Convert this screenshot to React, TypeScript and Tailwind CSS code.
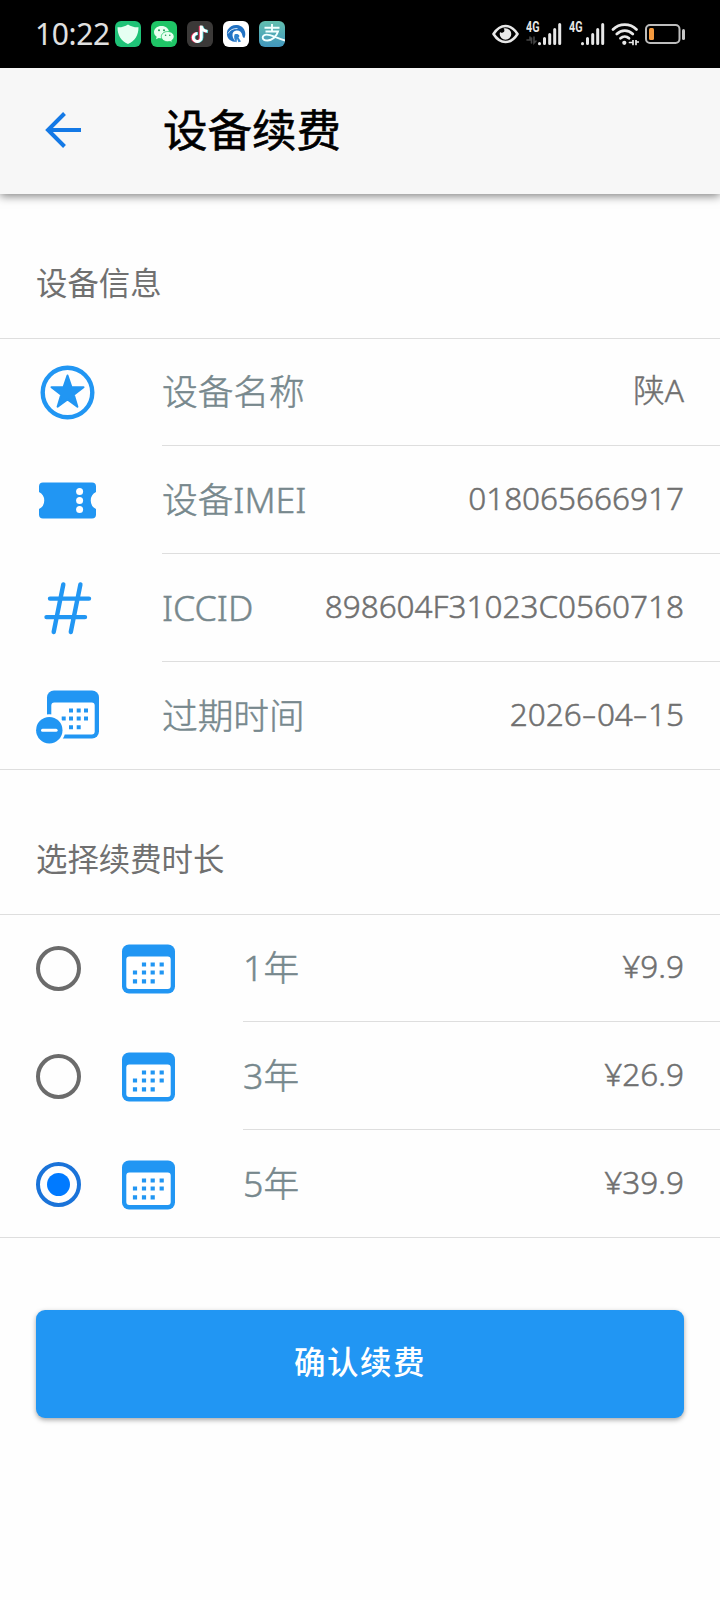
import type { ReactNode } from 'react';

const BLUE = '#2196f3';

function StarIcon() {
	return (
		<svg width="63" height="63" viewBox="0 0 63 63" fill={BLUE}>
			<circle cx="31.5" cy="31.5" r="24.8" fill="none" stroke={BLUE} strokeWidth="4.4" />
			<path
				d="M31.5 14.5l4 11.7h12l-9.700 7.500 3.600 12-9.900-7.200-9.900 7.200 3.600-12-9.700-7.500h12z"
				stroke={BLUE}
				strokeWidth="2"
				strokeLinejoin="round"
			/>
		</svg>
	);
}

function TicketIcon() {
	return (
		<svg width="63" height="63" viewBox="0 0 63 63">
			<path
				d="M7 13.500h49a4 4 0 0 1 4 4v5.500a9.500 9.500 0 0 0 0 17v5.500a4 4 0 0 1-4 4H7a4 4 0 0 1-4-4V40a9.500 9.500 0 0 0 0-17v-5.500a4 4 0 0 1 4-4z"
				fill={BLUE}
			/>
			<g fill="#fff">
				<circle cx="43.600" cy="22.500" r="3.500" />
				<circle cx="43.600" cy="31.500" r="3.500" />
				<circle cx="43.600" cy="40.500" r="3.500" />
			</g>
		</svg>
	);
}

function HashIcon() {
	return (
		<svg width="63" height="63" viewBox="0 0 63 63" fill="none" stroke={BLUE} strokeWidth="4.4" strokeLinecap="round">
			<path d="M27.300 7.500l-9.600 47.500M44.400 7.500l-9.600 47.500M14 21.600h39M10.500 40.100h38.500" />
		</svg>
	);
}

function CalendarMinusIcon() {
	return (
		<svg width="63" height="63" viewBox="0 0 63 63" fill={BLUE}>
			<rect x="11" y="5.500" width="52" height="48" rx="7" />
			<rect x="15.300" y="17.500" width="43.400" height="32" rx="3" fill="#fff" />
			<path
				d="M35 25.500h0M42.700 25.500h0M50 25.500h0M27.700 33.500h0M35 33.500h0M42.700 33.500h0M50 33.500h0M35 42.200h0M42.700 42.200h0"
				stroke={BLUE}
				strokeWidth="4"
				strokeLinecap="square"
				transform="translate(0 0)"
			/>
			<circle cx="13.300" cy="45.200" r="16" fill="#fff" />
			<circle cx="13.300" cy="45.200" r="13.200" />
			<path d="M6.500 45.200h13.600" stroke="#fff" strokeWidth="3" strokeLinecap="round" />
		</svg>
	);
}

function CalendarIcon() {
	return (
		<svg width="63" height="63" viewBox="0 0 63 63" fill={BLUE}>
			<rect x="5" y="7.500" width="53" height="49" rx="7" />
			<rect x="9.300" y="19.500" width="44.400" height="32.600" rx="3" fill="#fff" />
			<path
				d="M27 27.500h0M35.700 27.500h0M44.700 27.500h0M18 35.500h0M27 35.500h0M35.700 35.500h0M44.700 35.500h0M18 44.400h0M27 44.400h0M35.700 44.400h0"
				stroke={BLUE}
				strokeWidth="4.200"
				strokeLinecap="square"
			/>
		</svg>
	);
}

function AppBadges() {
	return (
		<div className="flex gap-[10px]">
			<svg width="26" height="26" viewBox="0 0 26 26">
				<rect width="26" height="26" rx="6" fill="#1fc277" />
				<path d="M13 3.500c3 2 6.500 3 10.500 2.800 0 8-3.500 14-10.500 16.700C6 20.300 2.500 14.300 2.500 6.300 6.500 6.500 10 5.500 13 3.500z" fill="#e6fff2" />
			</svg>
			<svg width="26" height="26" viewBox="0 0 26 26">
				<rect width="26" height="26" rx="6" fill="#1fc566" />
				<path d="M10.500 5c-4.300 0-7.500 2.700-7.500 6.100 0 2 1 3.600 2.700 4.700l-.7 2.500 2.700-1.400c1 .3 1.800.4 2.800.4 4.200 0 7.500-2.700 7.500-6.200S14.800 5 10.500 5z" fill="#e8fff0" />
				<path d="M16.700 10.500c-3.600 0-6.400 2.300-6.400 5.100s2.800 5.100 6.400 5.100c.8 0 1.600-.1 2.300-.3l2.300 1.200-.6-2c1.500-1 2.400-2.400 2.400-4 0-2.800-2.900-5.100-6.400-5.100z" fill="#e8fff0" stroke="#1fc566" strokeWidth=".8" />
				<g fill="#1f9c55">
					<circle cx="8" cy="9.300" r="1" />
					<circle cx="13" cy="9.300" r="1" />
					<circle cx="14.600" cy="14.200" r=".8" />
					<circle cx="18.800" cy="14.200" r=".8" />
				</g>
			</svg>
			<svg width="26" height="26" viewBox="0 0 26 26" fill="none" strokeWidth="2.800">
				<rect width="26" height="26" rx="6" fill="#3b3938" />
				<path d="M13.200 5v11.500a4 4 0 1 1-4-4M13.200 5.500c.6 3 2.800 4.800 6 5" stroke="#e8315b" />
				<path d="M15 5v11.500a4 4 0 1 1-4-4M15 5.500c.6 3 2.800 4.800 6 5" stroke="#4fe3e0" />
				<path d="M14.200 4.500v12a4 4 0 1 1-4-4M14.200 5.200c.6 3 2.800 4.800 6 5" stroke="#fff" />
			</svg>
			<svg width="26" height="26" viewBox="0 0 26 26">
				<rect width="26" height="26" rx="6" fill="#fff" />
				<path
					d="M4.500 9C6.500 5.500 10 3.700 14 4c5 .4 8.500 4.500 8.300 9.300-.1 1.700-.4 2.700-1 3.700-1-.3-1.600-1-1.800-2-.6-4-3-5.700-6-5.500-2.700.2-4.300 2.300-4 5 .3 2.800 1.800 5 4 6.500C8 21 4.500 18 4 14c-.2-2 0-3.500.5-5z"
					fill="#2272c3"
				/>
				<path d="M11.500 13.500c2-1 4-.5 5 1.500l-1 1.500 2.500 4-2.500.7-1.500-3.500-.5 3.700c-2-1.700-3-4.900-2-7.900z" fill="#2f83d0" />
				<path d="M5 12.500C7 9 10 7.300 14.500 7.500" fill="none" stroke="#fff" strokeWidth=".8" />
			</svg>
			<div className="overflow-hidden rounded-[6px] bg-gradient-to-b from-[#62bfae] to-[#4296bd]">
				<svg width="26" height="26" viewBox="0 0 26 26" fill="none" stroke="#f2ffff" strokeWidth="1.900">
					<path d="M5.500 6.800h15M13 3v7.300M6.500 10.500h12.500c-1.500 4.800-5.500 9-10.500 9-3 0-4.800-1.200-4.800-3 0-1.700 1.600-2.900 4-2.900 4.500 0 8.800 3.200 18.300 5.900" />
				</svg>
			</div>
		</div>
	);
}

function Signal({ data = false }: { data?: boolean }) {
	return (
		<div className="relative h-[24px] w-[36px]">
			<span className="absolute left-0 top-[-1px] origin-left scale-x-[.74] font-['Roboto'] text-[14.500px] font-bold leading-[14px] text-[#e6e6e6]">4G</span>
			<svg width="36" height="24" viewBox="0 0 36 24" stroke="#e8e8e8" strokeWidth="3" strokeLinecap="round">
				{data && <path d="M1 18h3v-3M5.500 21v-5M8 15v6l2-2" fill="none" stroke="#444" strokeWidth="1.600" />}
				<path d="M13.500 21.700v-.2M18.500 21.500v-5M23.700 21.500v-9M28.700 21.500V7.500M33.700 21.500V2.500" />
			</svg>
		</div>
	);
}

function StatusBar() {
	return (
		<div className="flex h-[68px] items-center bg-black pl-[35px] pr-[34px]">
			<span className="w-[80px] pb-px text-[30px] tracking-[-.4px] text-[#e0e0e0]">10:22</span>
			<AppBadges />
			<div className="ml-auto flex items-center">
				<svg className="mr-[7px]" width="27" height="20" viewBox="0 0 27 20">
					<path d="M1.500 10C5 4.500 9 2 13.500 2S22 4.500 25.500 10C22 15.500 18 18 13.500 18S5 15.500 1.500 10z" fill="none" stroke="#e8e8e8" strokeWidth="2.600" strokeLinejoin="round" />
					<path d="M13.500 4.200a5.800 5.800 0 1 1-5.800 5.800c0-.8.200-1.500.4-2.100 1.500 1.600 4.400.8 4.300-1.400 0-.9-.3-1.500-.8-2 .6-.2 1.200-.3 1.900-.3z" fill="#e8e8e8" />
				</svg>
				<Signal data />
				<div className="w-[7px]" />
				<Signal />
				<svg className="ml-[6px]" width="28" height="24" viewBox="0 0 28 24" fill="none" stroke="#e8e8e8" strokeLinecap="round">
					<path d="M2 7.500c6.500-6.500 17-6.500 23.500 0M5.800 12c4.500-4.500 11.500-4.500 16 0M9.500 16.300c2.500-2.300 6-2.300 8.500 0" strokeWidth="2.800" />
					<circle cx="13.300" cy="20.800" r="2.100" fill="#e8e8e8" stroke="none" />
					<path d="M18.500 20.500h3.500v-2.500v4.500M25 22.500v-4.500v2h2.500" strokeWidth="1.700" />
				</svg>
				<svg className="ml-[6px]" width="41" height="20" viewBox="0 0 41 20">
					<rect x="1" y="1" width="33.500" height="18" rx="4" fill="none" stroke="#bdbdbd" strokeWidth="2" />
					<rect x="4" y="4" width="5" height="12" rx="1.500" fill="#f59a3e" />
					<rect x="37" y="5" width="3" height="11" rx="1.500" fill="#c8c8c8" />
				</svg>
			</div>
		</div>
	);
}

function SectionTitle({ children }: { children: ReactNode }) {
	return (
		<div className="-mb-px flex h-[145px] items-center border-b border-[#dedede] px-9 pt-[33px]">
			<h2 className="text-[31.400px] leading-[44px] text-[#707070]">{children}</h2>
		</div>
	);
}

// hyphens are drawn wider than the font's own
function Value({ text }: { text: string }) {
	const parts = text.split('-');
	return (
		<span className="pb-[3px] text-[31.500px] font-light text-[#707070] [-webkit-text-stroke:0.5px_#707070]">
			{parts.map((part, i) => (
				<span key={i}>
					{i > 0 && <span className="mx-[2.500px] inline-block scale-x-[1.450]">-</span>}
					{part}
				</span>
			))}
		</span>
	);
}

function Row({ media, label, value, last }: { media: ReactNode; label: string; value: string; last?: boolean }) {
	return (
		<div className={`flex h-[108px] pl-9 ${last ? 'border-b border-[#dedede]' : ''}`}>
			<div className="flex h-[108px] items-center">{media}</div>
			<div className={`ml-[63px] flex flex-1 items-center justify-between pr-9 ${last ? '' : 'border-b border-[#dedede]'}`}>
				<span className="text-[35.700px] font-light text-[#77888d] [-webkit-text-stroke:0.5px_#77888d]">{label}</span>
				<Value text={value} />
			</div>
		</div>
	);
}

function Radio({ checked }: { checked?: boolean }) {
	return (
		<span className={`mr-9 flex size-[45px] items-center justify-center rounded-full border-4 ${checked ? 'border-[#1a73d9]' : 'border-[#6b6b6b]'}`}>
			{checked && <span className="size-[23px] rounded-full bg-[#007aff]" />}
		</span>
	);
}

const plans = [
	{ label: '1年', price: '¥9.9' },
	{ label: '3年', price: '¥26.9' },
	{ label: '5年', price: '¥39.9', checked: true },
];

export default function App() {
	return (
		<div className="h-[1600px] w-[720px] overflow-hidden bg-[#fefefe] font-['Noto_Sans','Noto_Sans_CJK_SC',sans-serif]">
			<StatusBar />
			<header className="flex h-[126px] items-center bg-[#f7f7f7] pl-[45px] shadow-[0_2px_9px_rgba(0,0,0,.5)]">
				<svg className="mb-[2px]" width="37" height="36" viewBox="0 0 37 36" fill="none" stroke="#1479e6" strokeWidth="4">
					<path d="M36 18H3M19.500 1.500L3 18l16.500 16.500" />
				</svg>
				<h1 className="ml-[81px] pb-px text-[44.500px] text-black [-webkit-text-stroke:0.6px_black]">设备续费</h1>
			</header>

			<SectionTitle>设备信息</SectionTitle>
			<Row media={<StarIcon />} label="设备名称" value="陕A" />
			<Row media={<TicketIcon />} label="设备IMEI" value="018065666917" />
			<Row media={<HashIcon />} label="ICCID" value="898604F31023C0560718" />
			<Row media={<CalendarMinusIcon />} label="过期时间" value="2026-04-15" last />

			<SectionTitle>选择续费时长</SectionTitle>
			{plans.map((plan, i) => (
				<Row
					key={plan.label}
					media={
						<>
							<Radio checked={plan.checked} />
							<CalendarIcon />
						</>
					}
					label={plan.label}
					value={plan.price}
					last={i === plans.length - 1}
				/>
			))}

			<div className="px-9 pt-[72px]">
				<button className="h-[108px] w-full rounded-[9px] bg-[#2196f3] pb-[4px] text-[31.500px] font-medium tracking-[1.500px] text-white shadow-[0_2px_5px_rgba(0,0,0,.35)]">
					确认续费
				</button>
			</div>
		</div>
	);
}
